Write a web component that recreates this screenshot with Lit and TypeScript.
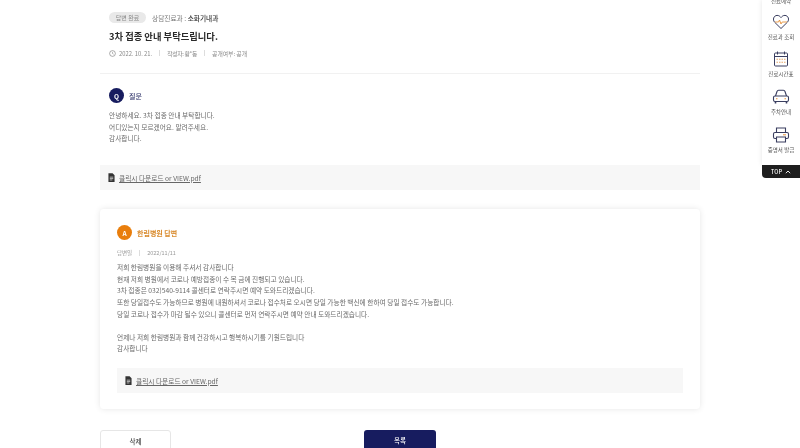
import { LitElement, html, css, svg } from "lit";
import { customElement } from "lit/decorators.js";

const fileIcon = html`<svg class="ficon" viewBox="0 0 8 10"><path d="M0.5 0H5.2L7.5 2.4V10H0.5Z" fill="#333"/><path d="M2 4.6H6M2 6.2H6M2 7.8H5" stroke="#fff" stroke-width=".7"/></svg>`;

const items = [
  { label: "진료과 조회", icon: svg`<path d="M9 15.5 2.6 9.2C.4 6.8 1.6 2.6 5 2.4c1.800-.1 3 .9 4 2.200 1-1.300 2.200-2.300 4-2.200 3.400.2 4.600 4.400 2.400 6.800Z" fill="none" stroke="#3a3e60" stroke-width="1"/><path d="M3 9h3.500l1-2 1.500 4 1.200-2H15" fill="none" stroke="#e7923a" stroke-width=".9"/>` },
  { label: "진료시간표", icon: svg`<rect x="2.500" y="3" width="13" height="13" rx="1" fill="none" stroke="#3a3e60" stroke-width="1"/><path d="M2.500 6.500h13M5.500 1.500v3M12.500 1.500v3" stroke="#3a3e60" stroke-width="1"/><path d="M4.500 9.300h9M4.500 12.300h9" stroke="#e7a86a" stroke-width="1.100" stroke-dasharray="1.500 1"/>` },
  { label: "주차안내", icon: svg`<path d="M3.500 8 5 3.500C5.300 2.700 5.800 2.300 6.600 2.300h4.800c.8 0 1.300.4 1.600 1.200L14.500 8" fill="none" stroke="#3a3e60" stroke-width="1.100"/><rect x="1.500" y="8" width="15" height="5.500" rx="1.500" fill="none" stroke="#3a3e60" stroke-width="1.100"/><path d="M3.500 13.500v2M14.500 13.500v2" stroke="#3a3e60" stroke-width="1.600"/><path d="M4 10.700h1.500M12.500 10.700H14" stroke="#e7923a" stroke-width="1.100"/>` },
  { label: "증명서 발급", icon: svg`<path d="M4.500 6.500V2h9v4.500" fill="none" stroke="#3a3e60" stroke-width="1.100"/><rect x="1.500" y="6.500" width="15" height="6" rx="1.500" fill="none" stroke="#3a3e60" stroke-width="1.100"/><path d="M4.500 11v5h9v-5Z" fill="#fff" stroke="#3a3e60" stroke-width="1.100"/><path d="M11 8.800h3" stroke="#e7923a" stroke-width="1"/>` },
];

@customElement("app-root")
export class AppRoot extends LitElement {
  static styles = css`
    :host {
      display: block;
      position: relative;
      width: 800px;
      height: 448px;
      overflow: hidden;
      background: #fff;
      font-family: "Noto Sans CJK KR", "Noto Sans", sans-serif;
      color: #555;
    }
    .page {
      width: 600px;
      margin-left: 100px;
      display: flex;
      flex-direction: column;
      filter: blur(0.35px);
    }
    .head {
      padding: 12px 9px 0;
      height: 61px;
      box-sizing: content-box;
      border-bottom: 1px solid #f1f1f1;
    }
    .tagrow { display: flex; align-items: center; gap: 6px; height: 11px; font-size: 6.7px; color: #777; }
    .tag {
      width: 37px; height: 11px; border-radius: 6px; background: #e9e9e9;
      display: flex; align-items: center; justify-content: center; color: #888; font-size: 6px;
    }
    .tagrow b { color: #333; font-weight: 500; }
    h1 { margin: 6px 0 0; font-size: 9.300px; line-height: 15px; font-weight: 700; color: #2a2a2a; }
    .meta { display: flex; align-items: center; margin-top: 4px; height: 10px; font-size: 5.8px; color: #888; }
    .meta svg { width: 7px; height: 7px; margin-right: 3px; }
    .meta span.who { letter-spacing: -.3px; }
    .meta i { width: 1px; height: 6px; background: #ddd; margin: 0 7px; }
    .question { padding: 14px 9px 0; height: 91px; box-sizing: border-box; }
    .badgeRow { display: flex; align-items: center; gap: 5px; height: 15px; }
    .badge {
      width: 15px; height: 15px; border-radius: 50%; color: #fff;
      display: flex; align-items: center; justify-content: center; font-size: 6.5px; font-weight: 700;
    }
    .q { background: #171c5f; }
    .a { background: #e97e0c; }
    .qlabel { font-size: 7px; font-weight: 500; color: #2a2f66; }
    .alabel { font-size: 7px; font-weight: 700; color: #d98a2b; }
    .body { font-size: 6.7px; line-height: 11.640px; color: #6a6a6a; }
    .question .body { margin-top: 7px; }
    .file {
      display: flex; align-items: center; gap: 4px; height: 25px; padding-left: 8px;
      background: #f7f7f7; font-size: 6.7px; color: #666;
    }
    .file span { text-decoration: underline; }
    .ficon { width: 7px; height: 9px; }
    .card {
      margin-top: 19px; height: 200px; box-sizing: border-box; padding: 16px 17px 0;
      border-radius: 4px; box-shadow: 0 0 6px rgba(0, 0, 0, .1); background: #fff;
    }
    .date { display: flex; align-items: center; height: 10px; margin-top: 8px; font-size: 5.5px; color: #999; }
    .date i { width: 1px; height: 6px; background: #ddd; margin: 0 7px; }
    .card .body { margin-top: 4px; }
    .card .file { margin-top: 13px; }
    .btns { display: grid; grid-template-columns: 71px 72px; justify-content: start; column-gap: 193px; margin-top: 21px; }
    .btn {
      height: 36px; box-sizing: border-box; border-radius: 3px 3px 0 0; padding-top: 3px;
      display: flex; align-items: flex-start; justify-content: center; line-height: 14px; font-size: 6.5px; font-weight: 500;
    }
    .del { border: 1px solid #e6e6e6; color: #444; background: #fff; }
    .list { background: #171c5f; color: #fff; }
    .side {
      position: absolute; top: 0; right: 0; width: 38px; height: 178px;
      filter: blur(0.35px);
    }
    .sidebox {
      height: 165px; background: #fff; box-shadow: 0 0 5px rgba(0, 0, 0, .1);
      display: flex; flex-direction: column; align-items: center; overflow: hidden;
    }
    .first { font-size: 5.500px; line-height: 8px; margin-top: -3px; color: #555; height: 15.500px; flex: none; }
    .item { display: flex; flex-direction: column; align-items: center; height: 37.800px; flex: none; font-size: 5.500px; color: #555; }
    .item svg { width: 18px; height: 18px; }
    .item span { margin-top: 2px; line-height: 8px; }
    .top {
      height: 13px; background: #1e1e1e; color: #fff; border-radius: 0 0 0 4px;
      display: flex; align-items: center; justify-content: center; gap: 3px; font-size: 5.500px; font-weight: 500;
    }
    .top svg { width: 6px; height: 4px; }
  `;

  render() {
    return html`
      <div class="page">
        <div class="head">
          <div class="tagrow"><span class="tag">답변 완료</span><span>상담진료과 : <b>소화기내과</b></span></div>
          <h1>3차 접종 안내 부탁드립니다.</h1>
          <div class="meta">
            <svg viewBox="0 0 8 8"><circle cx="4" cy="4" r="3.300" fill="none" stroke="#777" stroke-width=".7"/><path d="M4 2.200V4l1.300.8" fill="none" stroke="#777" stroke-width=".6"/></svg>
            <span>2022. 10. 21.</span><i></i><span class="who">작성자: 황*동</span><i></i><span>공개여부: 공개</span>
          </div>
        </div>
        <div class="question">
          <div class="badgeRow"><span class="badge q">Q</span><span class="qlabel">질문</span></div>
          <div class="body">안녕하세요. 3차 접종 안내 부탁합니다.<br />어디있는지 모르겠어요. 알려주세요.<br />감사합니다.</div>
        </div>
        <div class="file">${fileIcon}<span>클릭시 다운로드 or VIEW.pdf</span></div>
        <div class="card">
          <div class="badgeRow"><span class="badge a">A</span><span class="alabel">한림병원 답변</span></div>
          <div class="date"><span>답변일</span><i></i><span>2022/11/11</span></div>
          <div class="body">
            저희 한림병원을 이용해 주셔서 감사합니다<br />
            현재 저희 병원에서 코로나 예방접종이 수 목 금에 진행되고 있습니다.<br />
            3차 접종은 032)540-9114 콜센터로 연락주시면 예약 도와드리겠습니다.<br />
            또한 당일접수도 가능하므로 병원에 내원하셔서 코로나 접수처로 오시면 당일 가능한 백신에 한하여 당일 접수도 가능합니다.<br />
            당일 코로나 접수가 마감 될수 있으니 콜센터로 먼저 연락주시면 예약 안내 도와드리겠습니다.<br /><br />
            언제나 저희 한림병원과 함께 건강하시고 행복하시기를 기원드립니다<br />
            감사합니다
          </div>
          <div class="file">${fileIcon}<span>클릭시 다운로드 or VIEW.pdf</span></div>
        </div>
        <div class="btns">
          <div class="btn del">삭제</div>
          <div class="btn list">목록</div>
        </div>
      </div>
      <aside class="side">
        <div class="sidebox">
          <div class="first">진료예약</div>
          ${items.map((i) => html`<div class="item"><svg viewBox="0 0 18 18">${i.icon}</svg><span>${i.label}</span></div>`)}
        </div>
        <div class="top">TOP <svg viewBox="0 0 6 4"><path d="M.8 3.200 3 1l2.200 2.200" fill="none" stroke="#fff" stroke-width=".9"/></svg></div>
      </aside>
    `;
  }
}
